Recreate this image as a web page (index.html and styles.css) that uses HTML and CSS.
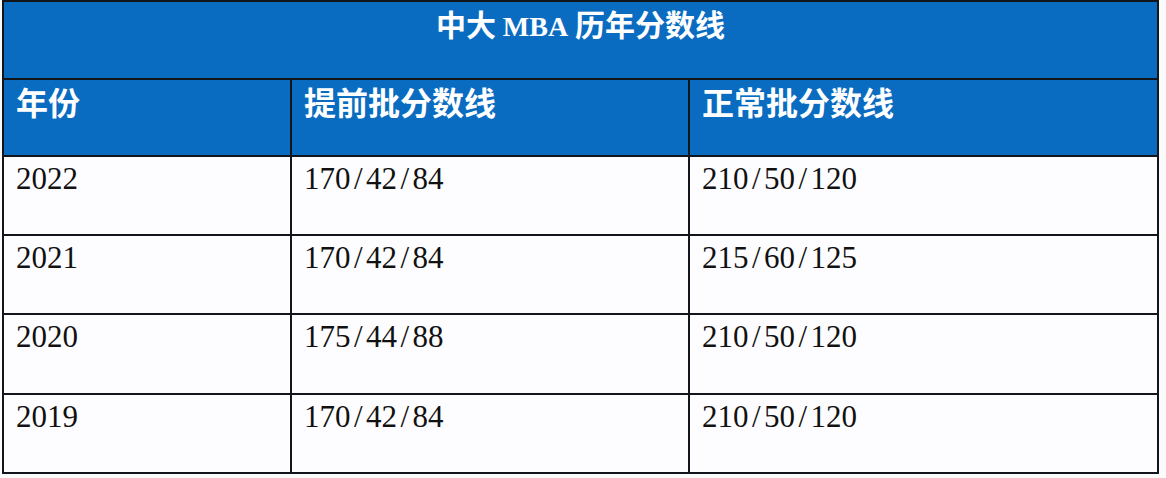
FILE: index.html
```html
<!DOCTYPE html>
<html lang="zh-CN">
<head>
<meta charset="utf-8">
<title>中大 MBA 历年分数线</title>
<link rel="stylesheet" href="styles.css">
</head>
<body>
<table class="scores">
  <colgroup>
    <col class="c1">
    <col class="c2">
    <col class="c3">
  </colgroup>
  <thead>
    <tr class="title-row">
      <th colspan="3" class="title">中大 <span class="latin">MBA</span> 历年分数线</th>
    </tr>
    <tr class="head-row">
      <th>年份</th>
      <th>提前批分数线</th>
      <th>正常批分数线</th>
    </tr>
  </thead>
  <tbody>
    <tr class="r1">
      <td>2022</td>
      <td>170<span class="sl">/</span>42<span class="sl">/</span>84</td>
      <td>210<span class="sl">/</span>50<span class="sl">/</span>120</td>
    </tr>
    <tr class="r2">
      <td>2021</td>
      <td>170<span class="sl">/</span>42<span class="sl">/</span>84</td>
      <td>215<span class="sl">/</span>60<span class="sl">/</span>125</td>
    </tr>
    <tr class="r3">
      <td>2020</td>
      <td>175<span class="sl">/</span>44<span class="sl">/</span>88</td>
      <td>210<span class="sl">/</span>50<span class="sl">/</span>120</td>
    </tr>
    <tr class="r4">
      <td>2019</td>
      <td>170<span class="sl">/</span>42<span class="sl">/</span>84</td>
      <td>210<span class="sl">/</span>50<span class="sl">/</span>120</td>
    </tr>
  </tbody>
</table>
</body>
</html>
```

FILE: styles.css
```css
html, body {
  margin: 0;
  padding: 0;
  background: #fbfbfb;
}

.scores {
  margin: 0 0 0 2px;
  width: 1155px;
  border-collapse: collapse;
  table-layout: fixed;
  background: #fdfdff;
}

.c1 { width: 288px; }
.c2 { width: 398px; }
.c3 { width: 469px; }

.scores th,
.scores td {
  border: 2px solid #12161c;
  vertical-align: top;
  text-align: left;
  padding: 0 12px;
}

.scores thead th {
  background: #0a6cc1;
  color: #ffffff;
  font-family: "Noto Sans CJK SC", "Noto Sans", sans-serif;
  font-weight: 700;
  font-size: 32px;
  line-height: 40px;
}

.title-row { height: 78px; }
.head-row { height: 77px; }

.scores th.title {
  text-align: center;
  padding-top: 1px;
  font-size: 30px;
}

.scores .head-row th {
  padding-top: 1px;
}

.latin {
  font-family: "Liberation Serif", serif;
  font-weight: 700;
  font-size: 28px;
}

.scores td {
  font-family: "Liberation Serif", serif;
  font-size: 31px;
  line-height: 36px;
  color: #111111;
  padding-top: 4px;
}

.r1 { height: 79px; }
.r2 { height: 79px; }
.r3 { height: 80px; }
.r4 { height: 79px; }

.sl {
  display: inline-block;
  width: 0.5em;
  text-align: center;
}
```
